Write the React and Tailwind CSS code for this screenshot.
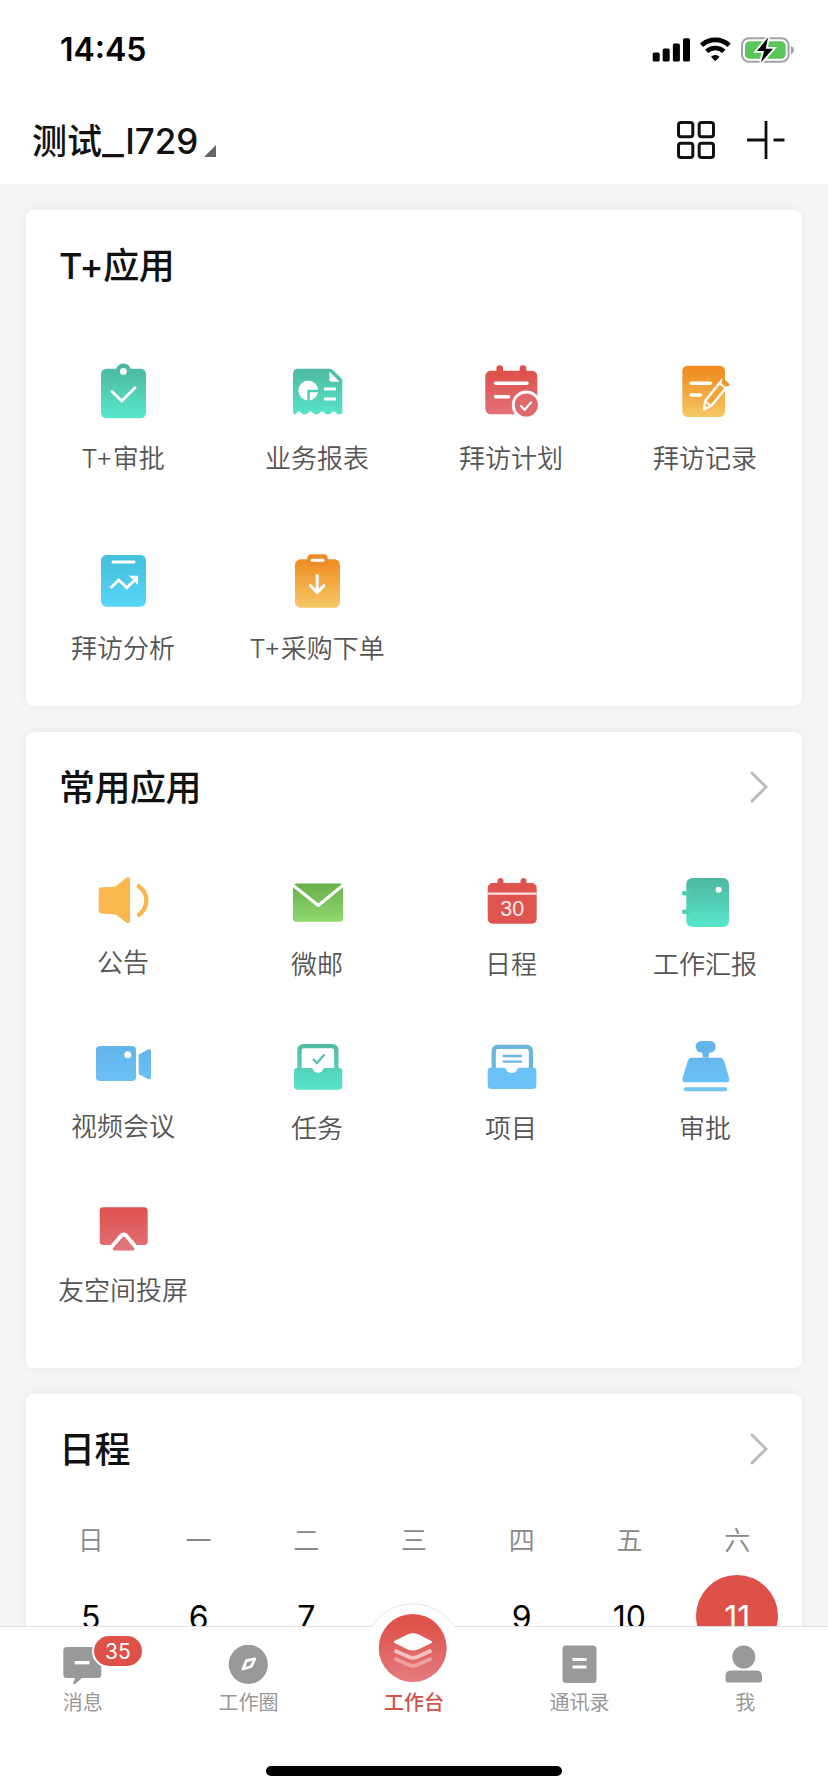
const GRADIENTS = [
  { id: 'teal', from: '#4db8a0', to: '#58e6cb' },
  { id: 'red', from: '#de4f49', to: '#e2737a' },
  { id: 'orange', from: '#ee8a1e', to: '#f7c766' },
  { id: 'cyan', from: '#45c1de', to: '#58d6f8' },
  { id: 'green', from: '#62a946', to: '#97de76' },
  { id: 'blue', from: '#62b3e6', to: '#6dc3fb' },
];

function Gradients() {
  return (
    <svg className="absolute size-0" aria-hidden="true">
      <defs>
        {GRADIENTS.map((g) => (
          <linearGradient key={g.id} id={g.id} gradientUnits="userSpaceOnUse" x1="0" y1="8" x2="0" y2="57">
            <stop offset="0" stopColor={g.from} />
            <stop offset="1" stopColor={g.to} />
          </linearGradient>
        ))}
      </defs>
    </svg>
  );
}

const line = { fill: 'none', stroke: '#fff', strokeWidth: 3, strokeLinecap: 'round', strokeLinejoin: 'round' };

const ApprovalIcon = () => (
  <>
    <rect x="10" y="8.7" width="45" height="49.6" rx="5.5" fill="url(#teal)" />
    <circle cx="32.5" cy="11" r="7.6" fill="url(#teal)" />
    <circle cx="32.4" cy="11.4" r="3.4" fill="#fff" />
    <path d="M21 31.5 30.7 41 44 27.8" {...line} />
  </>
);

const ReportIcon = () => (
  <>
    <path
      d="M13 8.7h31.5q2 0 3.2 1.2l8.4 8.2q1.2 1.2 1.2 3V53q-1.5 1.4-3 1.4-2 0-4-2.2-1.6-1.8-3.2 0-2 2.2-4.2 2.2t-4.2-2.2q-1.6-1.8-3.2 0-2 2.2-4.2 2.2t-4.2-2.2q-1.6-1.8-3.2 0-2 2.2-4.2 2.2t-4.2-2.2q-1.6-1.8-3 0-2 2.2-3.4 2.2Q8 54.4 8 52V13.7q0-5 5-5Z"
      fill="url(#teal)"
    />
    <path d="M44.3 11.5 54.5 21.7H46.3q-2 0-2-2Z" fill="#fff" />
    <circle cx="23.3" cy="30.5" r="9.9" fill="#fff" />
    <path d="M23.6 41V31H34" fill="none" stroke="url(#teal)" strokeWidth="2.6" />
    <path d="M39 29h12M39 39h12" {...line} strokeWidth="2.8" strokeLinecap="butt" />
  </>
);

const PlanIcon = () => (
  <>
    <rect x="6.3" y="10.7" width="52" height="43.6" rx="5.5" fill="url(#red)" />
    <path d="M20.7 8.5v6M44 8.5v6" stroke="#de4f49" strokeWidth="6.6" strokeLinecap="round" />
    <path d="M16.5 23.3h31.5M16.5 36.7h13" {...line} strokeWidth="3.4" />
    <circle cx="47.3" cy="45" r="14.5" fill="#fff" />
    <circle cx="47.3" cy="45" r="11.6" fill="#e0696c" />
    <path d="m42 45.9 3.7 3.9 6.4-7.4" {...line} strokeWidth="2.2" />
  </>
);

const RecordIcon = () => (
  <>
    <rect x="9.3" y="5.7" width="42.7" height="51.3" rx="5.5" fill="url(#orange)" />
    <path d="M18 23.3h19.5M18 35h9.5" {...line} strokeWidth="3.4" />
    <path d="m49 20 6 5.500-16.500 20-7.500 4 1.500-9Z" fill="#f2a437" stroke="#fff" strokeWidth="2.4" strokeLinejoin="round" />
    <path d="m47 23.500 5.500 5M32.500 41.500l5 4" stroke="#fff" strokeWidth="1.8" />
    <path d="m50.500 21 4 3.500" stroke="#e8912c" strokeWidth="3.6" strokeLinecap="round" />
  </>
);

const AnalysisIcon = () => (
  <>
    <rect x="10" y="5" width="45" height="51.7" rx="5.5" fill="url(#cyan)" />
    <path d="M22 12h21" {...line} />
    <path d="m19.500 38 8.300-8L36 37.700l8.500-8.700" {...line} strokeWidth="2.9" strokeLinecap="butt" strokeLinejoin="miter" />
    <path d="M38 25.800h9v9.200l-3-3v-3.200h-3.200Z" fill="#fff" />
  </>
);

const PurchaseIcon = () => (
  <>
    <rect x="10" y="9.3" width="45" height="48.4" rx="5.5" fill="url(#orange)" />
    <rect x="22.3" y="4.3" width="20.4" height="12" rx="4" fill="#ea8c28" />
    <path d="M27 10.200h11" {...line} />
    <path d="M32.200 25.500V42M25.500 35.600l6.700 6.900 6.700-6.900" {...line} />
  </>
);

const NoticeIcon = () => (
  <g fill="#f8b84e">
    <path d="M11 19.300 22 19q2 0 3.800-1.400l8.500-7Q37 8.500 38.200 9.700q.8.800.8 2.300v40.600q0 1.600-.8 2.300-1.200 1.200-3.900-.8L27 48q-2-1.700-4-1.800l-12-.6q-3.300-.2-3.300-3.600V22.500q0-3.100 3.300-3.200Z" />
    <path d="M47.700 18.200Q55.500 24 55.400 32.500T48 46.800" fill="none" stroke="#f8b84e" strokeWidth="4.4" strokeLinecap="round" />
  </g>
);

const MailIcon = () => (
  <>
    <rect x="8" y="13.4" width="50" height="38.3" rx="3.5" fill="url(#green)" />
    <path d="m6.500 14 26.800 21.500L59.500 14" {...line} strokeLinecap="butt" />
  </>
);

const CalendarIcon = () => (
  <>
    <rect x="8.7" y="13" width="49" height="40.7" rx="5" fill="#de544f" />
    <path d="M21.500 11v5M44.500 11v5" stroke="#de544f" strokeWidth="6" strokeLinecap="round" />
    <path d="M8.700 23.700h49" stroke="#fbe3e1" strokeWidth="2.3" />
    <text x="33.2" y="45.8" textAnchor="middle" fontSize="21.5" fill="#fbe9e7" className="font-['Liberation_Sans',sans-serif]">
      30
    </text>
  </>
);

const WorkReportIcon = () => (
  <>
    <rect x="13.3" y="8" width="42.7" height="49" rx="6" fill="url(#teal)" />
    <path d="M11 23.300h4M11 41.700h4" stroke="#55cdb4" strokeWidth="4.4" strokeLinecap="round" />
    <circle cx="45.7" cy="19.7" r="3" fill="#fff" />
  </>
);

const VideoIcon = () => (
  <>
    <rect x="5" y="14" width="40" height="35" rx="4" fill="url(#blue)" />
    <circle cx="36.7" cy="22.7" r="3.5" fill="#fff" />
    <path d="M47.700 22.500 56.800 17.600Q60 16.300 60 19v26.300q0 3-3.200 1.700l-9.100-5Z" fill="url(#blue)" />
  </>
);

const TaskIcon = () => (
  <>
    <path d="M14.500 36V16.500q0-4.400 4.400-4.400h28q4.400 0 4.400 4.400V36" fill="none" stroke="url(#teal)" strokeWidth="4.3" />
    <path d="M12 34h14.500q1 0 1.300 1.200a5.600 5.600 0 0 0 10.400 0Q38.600 34 39.600 34H54q3.300 0 3.300 3v14.700q0 4-4 4H13q-4 0-4-4V37q0-3 3-3Z" fill="url(#teal)" />
    <path d="m28 25 3.900 4 7.600-8.500" fill="none" stroke="#4fc3ab" strokeWidth="2.4" />
  </>
);

const ProjectIcon = () => (
  <>
    <path d="M14.700 36V17.200q0-4.400 4.400-4.400h28.400q4.400 0 4.400 4.400V36" fill="none" stroke="#69b6da" strokeWidth="4.2" />
    <path d="M11.700 33.700H25q1.600 0 2 1.200a6 6 0 0 0 11.400 0q.4-1.200 2-1.200h14q3 0 3 3V51q0 4-4 4H12.700q-4 0-4-4V36.700q0-3 3-3Z" fill="#6cc2f8" />
    <path d="M24.500 22h17.500M24.500 27.700h17.500" stroke="#69b6da" strokeWidth="2.3" strokeLinecap="round" />
  </>
);

const StampIcon = () => (
  <>
    <rect x="22.7" y="7" width="20" height="11.6" rx="5.5" fill="url(#blue)" />
    <path d="M28 17q2 2 1.600 7h6.200q-.4-5 1.800-7ZM18.500 23.800h28.800q2.700 0 3.600 2.700l5.200 17.500q1 4.200-3 4.200H12.500q-4 0-3-4.200L14.900 26.500q.9-2.700 3.600-2.700Z" fill="url(#blue)" />
    <path d="M12.800 55.200h39.500" stroke="#76c3f2" strokeWidth="4" strokeLinecap="round" />
  </>
);

const CastIcon = () => (
  <>
    <rect x="8.7" y="11.3" width="48" height="37.7" rx="3.5" fill="url(#red)" />
    <path d="M32.700 41.500 42.500 53H22.800Z" fill="#fff" stroke="#fff" strokeWidth="10" strokeLinejoin="round" />
    <path d="M32.700 42 42 53H23.200Z" fill="#e2737a" stroke="#e2737a" strokeWidth="2.8" strokeLinejoin="round" />
  </>
);

const T_PLUS_APPS = [
  { name: 'T+审批', icon: ApprovalIcon },
  { name: '业务报表', icon: ReportIcon },
  { name: '拜访计划', icon: PlanIcon },
  { name: '拜访记录', icon: RecordIcon },
  { name: '拜访分析', icon: AnalysisIcon },
  { name: 'T+采购下单', icon: PurchaseIcon },
];

const COMMON_APPS = [
  { name: '公告', icon: NoticeIcon },
  { name: '微邮', icon: MailIcon },
  { name: '日程', icon: CalendarIcon },
  { name: '工作汇报', icon: WorkReportIcon },
  { name: '视频会议', icon: VideoIcon },
  { name: '任务', icon: TaskIcon },
  { name: '项目', icon: ProjectIcon },
  { name: '审批', icon: StampIcon },
  { name: '友空间投屏', icon: CastIcon },
];

const WEEK = [
  { label: '日', date: 5 },
  { label: '一', date: 6 },
  { label: '二', date: 7 },
  { label: '三', date: 8 },
  { label: '四', date: 9 },
  { label: '五', date: 10 },
  { label: '六', date: 11, today: true },
];

function StatusBar() {
  return (
    <div className="flex h-[98px] items-center justify-between pl-[60px] pr-[34px] pt-0.5">
      <span className="text-[32px] font-semibold leading-none text-black">14:45</span>
      <svg width="142" height="26" viewBox="0 0 142 26">
        <rect x="0.7" y="15.5" width="7" height="9" rx="1.5" />
        <rect x="10.7" y="11.5" width="7" height="13" rx="1.5" />
        <rect x="20.9" y="6.5" width="7" height="18" rx="1.5" />
        <rect x="31" y="1.2" width="7" height="23.3" rx="1.5" />
        <path d="M49.500 8.200a20.500 20.500 0 0 1 27.600 0M54.700 14.400a12.500 12.500 0 0 1 17.200 0" fill="none" stroke="#000" strokeWidth="4.6" />
        <path d="m63.300 24.200-4.300-4.400a6.200 6.200 0 0 1 8.600 0Z" />
        <rect x="90" y="1.2" width="46.6" height="23.6" rx="7" fill="none" stroke="#a3a3a8" strokeWidth="2" />
        <rect x="93" y="4.2" width="40.6" height="17.6" rx="4.5" fill="#5bc65c" />
        <path d="M138.800 9q3.200 1 3.200 4t-3.200 4Z" fill="#a3a3a8" />
        <path d="M116 0.500 105 14h7l-3 11.500L121 11.800h-7.200Z" stroke="#fff" strokeWidth="3.6" paintOrder="stroke" />
      </svg>
    </div>
  );
}

function TitleBar() {
  return (
    <div className="flex h-[86px] items-center justify-between pl-8 pr-[43px]">
      <div className="flex items-end">
        <h1 className="text-[35px] font-medium leading-[50px] text-[#111]">
          测试<span className="mr-[7px] inline-block origin-left scale-x-[1.35]">_</span>I729
        </h1>
        <svg className="mb-[9px] ml-1.5" width="12" height="12" viewBox="0 0 12 12">
          <path d="M12 0v12H0Z" fill="#666" />
        </svg>
      </div>
      <div className="flex items-center gap-8 pb-0.5">
        <svg width="38" height="38" viewBox="0 0 38 38" fill="none" stroke="#111" strokeWidth="3">
          <rect x="1.5" y="1.5" width="14.3" height="14.3" rx="2.5" />
          <rect x="22.2" y="1.5" width="14.3" height="14.3" rx="2.5" />
          <rect x="1.5" y="22.2" width="14.3" height="14.3" rx="2.5" />
          <rect x="22.2" y="22.2" width="14.3" height="14.3" rx="2.5" />
        </svg>
        <svg width="38" height="38" viewBox="0 0 38 38" stroke="#111" strokeWidth="2.8">
          <path d="M19 0v38M0 19h19M26.500 19h11" />
        </svg>
      </div>
    </div>
  );
}

function CardTitle({ title, more }) {
  return (
    <div className="flex h-[110px] items-center justify-between px-[33px]">
      <h2 className="pt-0.5 text-[36px] font-medium leading-[50px] tracking-[-0.5px] text-[#111]">{title}</h2>
      {more && (
        <svg width="20" height="34" viewBox="0 0 20 34" fill="none" stroke="#bbb" strokeWidth="3">
          <path d="m3 3 14 14L3 31" strokeLinecap="round" />
        </svg>
      )}
    </div>
  );
}

function AppItem({ app, className = '' }) {
  const Icon = app.icon;

  return (
    <div className={`flex flex-col items-center ${className}`}>
      <svg width="64" height="64" viewBox="0 0 64 64">
        <Icon />
      </svg>
      <span className="text-[26px] font-[350] leading-9 whitespace-nowrap text-[#555]">{app.name}</span>
    </div>
  );
}

function Card({ className = '', children }) {
  return (
    <section className={`shrink-0 rounded-lg bg-white shadow-[0_0_12px_rgba(0,0,0,0.05)] ${className}`}>{children}</section>
  );
}

function NavItem({ label, children }) {
  return (
    <div className="flex flex-col items-center gap-1">
      {children}
      <span className="text-[20px] leading-7 text-[#999]">{label}</span>
    </div>
  );
}

function BottomNav() {
  return (
    <nav className="relative flex h-[166px] shrink-0 flex-col items-center justify-between border-t border-[#e2e2e2] bg-white pb-4">
      <div className="grid w-full grid-cols-5 pt-[18px]">
        <NavItem label="消息">
          <div className="relative h-10">
            <svg width="40" height="40" viewBox="0 0 40 40">
              <rect x="0.3" y="2" width="38" height="31" rx="3.5" fill="#999" />
              <path d="M12.500 32h7.500l-8.500 7.500-1.500-1.200Z" fill="#999" />
              <path d="M11.500 17.700h15" stroke="#fff" strokeWidth="3.4" />
            </svg>
            <span className="absolute -top-[11px] left-[29px] flex h-[34px] w-[52px] items-center justify-center rounded-full border-2 border-white bg-[#de5149] text-[21px] leading-none text-white">
              35
            </span>
          </div>
        </NavItem>
        <NavItem label="工作圈">
          <svg width="40" height="40" viewBox="0 0 40 40">
            <circle cx="20.3" cy="19.3" r="19.6" fill="#999" />
            <path d="m18.500 15.500 8.300-1.500-3.500 7.500-8.300 2.500Z" fill="none" stroke="#fff" strokeWidth="2.8" strokeLinejoin="round" />
          </svg>
        </NavItem>
        <div className="relative flex flex-col items-center">
          {/* raised home button that breaks the top border */}
          <svg className="absolute -top-[42px] left-1/2 -translate-x-1/2" width="100" height="90" viewBox="0 0 100 90">
            <defs>
              <linearGradient id="home" x1="0" y1="0" x2="0" y2="1">
                <stop offset="0.15" stopColor="#df534c" />
                <stop offset="1" stopColor="#e47c7f" />
              </linearGradient>
            </defs>
            <path d="M8 23.500Q11 18 19 11a49 49 0 0 1 60 0q8 7 11 12.500V27H8Z" fill="#fff" />
            <path d="M8 23.500Q11 18 19 11a49 49 0 0 1 60 0q8 7 11 12.500" fill="none" stroke="#e6e6e6" />
            <circle cx="48.7" cy="45" r="34" fill="url(#home)" />
            <g fill="none" stroke="#fff" strokeWidth="4" strokeLinejoin="round">
              <path d="M30.500 47.500 45 54q4 1.700 8 0l14.500-6.500" opacity="0.6" />
              <path d="M30.500 55.500 45 62q4 1.700 8 0l14.500-6.500" opacity="0.35" />
            </g>
            <path d="M30.500 38 44 31.200q5-2 10 0L67.500 38q1.500 1 0 2L54 46.500q-5 2-10 0L30.500 40q-1.500-1 0-2Z" fill="#fff" />
          </svg>
          <span className="pt-11 text-[20px] font-medium leading-7 text-[#d2524c]">工作台</span>
        </div>
        <NavItem label="通讯录">
          <svg width="40" height="40" viewBox="0 0 40 40">
            <rect x="2.5" y="0.5" width="34" height="37.5" rx="3.5" fill="#999" />
            <path d="M12.500 14.500h14M12.500 22h14" stroke="#fff" strokeWidth="2.8" />
          </svg>
        </NavItem>
        <NavItem label="我">
          <svg width="40" height="40" viewBox="0 0 40 40" fill="#999">
            <circle cx="18.8" cy="12" r="11.5" />
            <path d="M5.500 25.500h26.500q5 0 5 6V35q0 2.500-2.500 2.500H3Q.5 37.500.5 35v-3.500q0-6 5-6Z" />
          </svg>
        </NavItem>
      </div>
      <div className="h-2.5 w-[296px] rounded-full bg-black" />
    </nav>
  );
}

export default function App() {
  return (
    <div className="flex h-[1792px] w-[828px] flex-col overflow-hidden bg-[#f5f5f5] font-[Inter,'Noto_Sans_CJK_SC',sans-serif]">
      <Gradients />
      <header className="h-[184px] shrink-0 bg-white">
        <StatusBar />
        <TitleBar />
      </header>

      <main className="flex min-h-0 flex-1 flex-col gap-[26px] overflow-hidden px-[26px] pt-[26px]">
        <Card className="h-[496px]">
          <CardTitle title="T+应用" />
          <div className="grid grid-cols-4 gap-y-[73px] pt-10">
            {T_PLUS_APPS.map((app) => (
              <AppItem key={app.name} app={app} className="gap-[17px]" />
            ))}
          </div>
        </Card>

        <Card className="h-[636px]">
          <CardTitle title="常用应用" more />
          <div className="grid grid-cols-4 gap-y-[51px] pt-7">
            {COMMON_APPS.map((app, i) => (
              <AppItem key={app.name} app={app} className={i % 4 === 0 ? 'gap-[13px] -mt-0.5' : 'gap-[13px]'} />
            ))}
          </div>
        </Card>

        <Card className="h-[520px]">
          <CardTitle title="日程" more />
          <div className="grid grid-cols-7 px-[11px] pt-[18px]">
            {WEEK.map((day) => (
              <div key={day.label} className="flex flex-col items-center gap-[15px]">
                <span className="text-[26px] font-[350] leading-[38px] text-[#888]">{day.label}</span>
                <span
                  className={`flex size-[82px] items-center justify-center rounded-full pt-[3px] text-[32px] leading-none ${
                    day.today ? 'bg-[#de5149] text-white' : 'text-black'
                  }`}
                >
                  {day.date}
                </span>
              </div>
            ))}
          </div>
        </Card>
      </main>

      <BottomNav />
    </div>
  );
}
